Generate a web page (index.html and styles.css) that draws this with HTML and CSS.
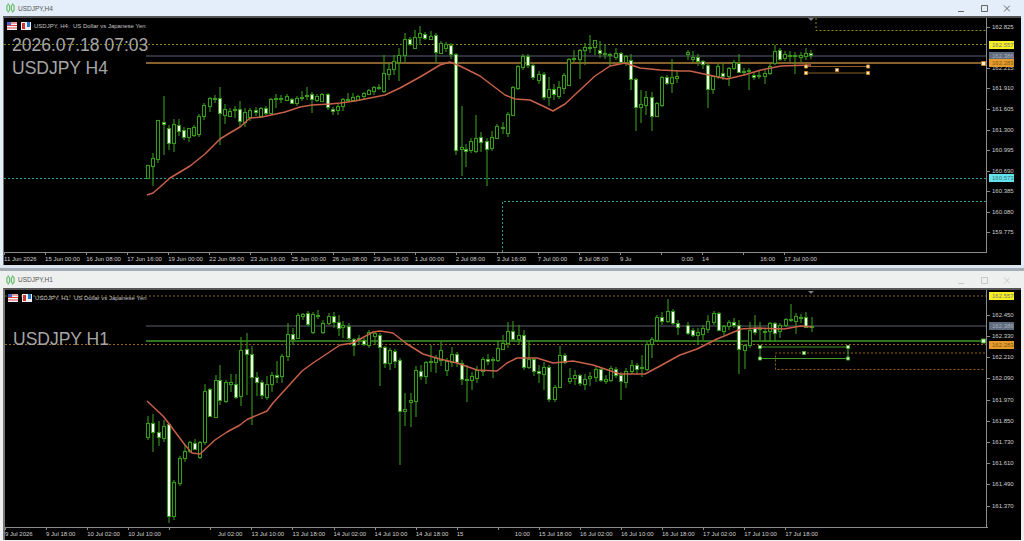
FILE: index.html
```html
<!DOCTYPE html>
<html lang="en">
<head>
<meta charset="utf-8">
<title>USDJPY charts</title>
<link rel="stylesheet" href="styles.css">
</head>
<body>
<section class="window window-top">
  <header class="titlebar">
    <svg class="app-icon" viewBox="0 0 10 10"><path d="M2.5 0v10M7.500 0v10" class="icon-wick"/><rect x="1" y="1.500" width="3" height="7" rx="1" class="icon-body"/><rect x="6" y="1.500" width="3" height="7" rx="1" class="icon-body"/></svg>
    <span class="title">USDJPY,H4</span>
    <div class="controls">
      <svg viewBox="0 0 52 12"><path d="M0 9.500h6M23.500 3.500h6v6h-6zM46 3.500l6 6M52 3.500l-6 6"/></svg>
    </div>
  </header>
  <div class="chart">
    <svg class="plot" id="plot-h4" viewBox="4 18 1017 247">
      <path class="dot yellow" d="M4 44.500H986M816 18V30.500H986"/>
      <path class="dot cyan" d="M4 178.500H986M502.500 252V201.500H986"/>
      <path class="level grey" d="M146 56H986"/>
      <path class="level amber" d="M146 63H986"/>
      <g class="candles"></g>
      <path class="ma" d="M147 195L153 193L160 187L170 178L190 166L205 154L220 139L228 134L240 127L250 118L262 117L285 112L300 107L312 105L330 104L340 103L355 101L385 95L400 88L420 77L440 65L450 62L460 66L480 76L505 95L515 99L530 100L545 107L553 111L565 104L580 90L595 76L610 66L625 63L640 68L660 70L680 71L690 71L704 74L727 79L744 75L761 70L781 66L811 65"/>
      <path class="rect amber-thin" d="M806 66.500H868M806 73H868"/>
      <path class="handles amber-h" d="M804.500 65h3v3h-3zM866.500 65h3v3h-3zM804.500 71.500h3v3h-3zM866.500 71.500h3v3h-3zM835.500 68.500h3v3h-3zM981.500 61.500h4v4h-4z"/>
      <path class="marker" d="M808 18h6l-3 3z"/>
    </svg>
    <div class="legend">
      <svg class="flag" viewBox="0 0 10 8"><rect width="10" height="8" fill="#f4f4f8"/><path d="M0 1h10M0 3.500h10M0 6h10" stroke="#d44"/><rect width="4" height="3" fill="#46c"/></svg>
      <svg class="mini" viewBox="0 0 10 8"><rect width="10" height="8" fill="#eee"/><rect x="1" y="1" width="3" height="6" fill="#c33"/><rect x="6" y="0" width="3" height="5" fill="#27c"/></svg>
      <span>USDJPY, H4:&nbsp; US Dollar vs Japanese Yen</span>
    </div>
    <div class="stamp">2026.07.18 07:03</div>
    <div class="stamp">USDJPY H4</div>
    <div class="time-axis">
      <span>11 Jun 2026</span><span>15 Jun 00:00</span><span>16 Jun 08:00</span><span>17 Jun 16:00</span><span>19 Jun 00:00</span><span>22 Jun 08:00</span><span>23 Jun 16:00</span><span>25 Jun 00:00</span><span>26 Jun 08:00</span><span>29 Jun 16:00</span><span>1 Jul 00:00</span><span>2 Jul 08:00</span><span>3 Jul 16:00</span><span>7 Jul 00:00</span><span>8 Jul 08:00</span><span>9 Ju</span><span class="end">0:00</span><span>14</span><span class="end">16:00</span><span>17 Jul 00:00</span>
    </div>
    <div class="price-axis">
      <span style="top:5px">162.825</span>
      <span style="top:46px">162.215</span>
      <span style="top:66px">161.910</span>
      <span style="top:87px">161.605</span>
      <span style="top:108px">161.300</span>
      <span style="top:128px">160.995</span>
      <span style="top:149px">160.690</span>
      <span style="top:169px">160.385</span>
      <span style="top:190px">160.080</span>
      <span style="top:210px">159.775</span>
      <span class="badge b-yellow" style="top:23px">162.557</span>
      <span class="badge b-grey" style="top:34px">162.386</span>
      <span class="badge b-orange" style="top:41px">162.283</span>
      <span class="badge b-cyan" style="top:156px">160.573</span>
    </div>
  </div>
</section>

<section class="window window-bottom">
  <header class="titlebar">
    <svg class="app-icon" viewBox="0 0 10 10"><path d="M2.5 0v10M7.500 0v10" class="icon-wick"/><rect x="1" y="1.500" width="3" height="7" rx="1" class="icon-body"/><rect x="6" y="1.500" width="3" height="7" rx="1" class="icon-body"/></svg>
    <span class="title">USDJPY,H1</span>
    <div class="controls">
      <svg viewBox="0 0 52 12"><path d="M0 9.500h6M23.500 3.500h6v6h-6zM46 3.500l6 6M52 3.500l-6 6"/></svg>
    </div>
  </header>
  <div class="chart">
    <svg class="plot" id="plot-h1" viewBox="5 290 1016 250">
      <path class="dot yellow2" d="M5 296H986"/>
      <path class="dot orange" d="M5 344.500H986M985 353H775.500V369.500H985"/>
      <path class="level grey" d="M146 326H986"/>
      <path class="level green" d="M146 341H986"/>
      <g class="candles"></g>
      <path class="ma" d="M147 401L163 416L170 425L185 445L192 453L200 454L215 440L227 432L240 425L247 419.500L267 411L273 403L302 371L313 363L340 345L353 343L373 332L380 331L393 333L407 344L423 354L440 359L457 363L477 370L497 371L507 363L517 358L537 358L553 363L573 361L593 365L620 374L645 374L660 366L680 355L697 349L717 339L741 329L757 328L784 329L801 326L812 327"/>
      <path class="rect green-thin" d="M760 347H848V358.500H760Z"/>
      <path class="handles green-h" d="M758.500 345.500h3v3h-3zM846.500 345.500h3v3h-3zM758.500 357h3v3h-3zM846.500 357h3v3h-3zM802.500 351.500h3v3h-3zM981.500 339h4v4h-4z"/>
      <path class="marker" d="M808 291h6l-3 3z"/>
    </svg>
    <div class="legend">
      <svg class="flag" viewBox="0 0 10 8"><rect width="10" height="8" fill="#f4f4f8"/><path d="M0 1h10M0 3.500h10M0 6h10" stroke="#d44"/><rect width="4" height="3" fill="#46c"/></svg>
      <svg class="mini" viewBox="0 0 10 8"><rect width="10" height="8" fill="#eee"/><rect x="1" y="1" width="3" height="6" fill="#c33"/><rect x="6" y="0" width="3" height="5" fill="#27c"/></svg>
      <span>USDJPY, H1:&nbsp; US Dollar vs Japanese Yen</span>
    </div>
    <div class="stamp stamp-h1">USDJPY H1</div>
    <div class="time-axis">
      <span>9 Jul 2026</span><span>9 Jul 18:00</span><span>10 Jul 02:00</span><span>10 Jul 10:00</span><span></span><span class="end">Jul 02:00</span><span>13 Jul 10:00</span><span>13 Jul 18:00</span><span>14 Jul 02:00</span><span>14 Jul 10:00</span><span>14 Jul 18:00</span><span>15</span><span class="end">10:00</span><span>15 Jul 18:00</span><span>16 Jul 02:00</span><span>16 Jul 10:00</span><span>16 Jul 18:00</span><span>17 Jul 02:00</span><span>17 Jul 10:00</span><span>17 Jul 18:00</span>
    </div>
    <div class="price-axis">
      <span style="top:21px">162.450</span>
      <span style="top:42px">162.330</span>
      <span style="top:63px">162.210</span>
      <span style="top:84px">162.090</span>
      <span style="top:106px">161.970</span>
      <span style="top:127px">161.850</span>
      <span style="top:148px">161.730</span>
      <span style="top:169px">161.610</span>
      <span style="top:190px">161.490</span>
      <span style="top:212px">161.370</span>
      <span class="badge b-yellow" style="top:2px">162.557</span>
      <span class="badge b-grey" style="top:32px">162.386</span>
      <span class="badge b-orange" style="top:51px">162.283</span>
    </div>
  </div>
</section>
<script src="chart.js"></script>
</body>
</html>
```

FILE: styles.css
```css
* { box-sizing: border-box; }
html, body { margin: 0; padding: 0; }
body {
  width: 1024px;
  height: 541px;
  overflow: hidden;
  background: #fff;
  font-family: "Liberation Sans", Arial, sans-serif;
  display: flex;
  flex-direction: column;
}
.window { padding: 0 3px 0 3px; display: flex; flex-direction: column; }
.window-top { height: 268px; background: #e3eefa; border-bottom: 3px solid #dbe6f0; }
.window-bottom { height: 273px; background: #eef0f0; border-top: 3px solid #a4adb6; }
.titlebar { display: flex; align-items: center; flex: none; position: relative; }
.window-top .titlebar { height: 16px; padding-left: 3px; }
.window-bottom .titlebar { height: 17px; padding-left: 3px; }
.app-icon { width: 9px; height: 10px; margin-right: 3px; flex: none; }
.icon-wick { stroke: #46a84a; fill: none; stroke-width: 1; }
.icon-body { stroke: #46a84a; fill: #dff3df; stroke-width: 1; }
.title { font-size: 6.500px; color: #555; letter-spacing: 0; }
.controls { margin-left: auto; margin-right: 11px; display: flex; }
.controls svg { width: 52px; height: 12px; fill: none; stroke: #666; stroke-width: 1; }
.window-bottom .controls svg { stroke: #c4c8c8; }
.chart {
  position: relative;
  flex: 1;
  background: #000;
  display: flex;
  flex-direction: column;
  border-top: 2px solid #555;
  border-left: 1px solid #777;
  color: #c4c4c4;
}
.window-bottom .chart { border-left-width: 2px; margin-bottom: 1px; }
.plot { position: absolute; left: 0; top: 0; width: 100%; height: 100%; }
.legend {
  position: relative;
  display: flex;
  align-items: center;
  height: 8px;
  margin-top: 4px;
  padding-left: 3px;
  font-size: 6px;
  line-height: 8px;
  color: #c0c0c0;
  flex: none;
}
.flag { width: 10px; height: 8px; margin-right: 4px; flex: none; }
.mini { width: 10px; height: 8px; margin-right: 3px; flex: none; }
.stamp {
  position: relative;
  font-size: 17.500px;
  line-height: 23px;
  color: #a6a6a6;
  padding-left: 8px;
  flex: none;
}
.legend + .stamp { margin-top: 4px; }
.legend + .stamp-h1 { margin-top: 26px; }
.time-axis {
  position: relative;
  margin-top: auto;
  flex: none;
  width: 983px;
  height: 13px;
  border-top: 1px solid #8c8c8c;
  display: grid;
  grid-template-columns: repeat(20, 41.070px);
  font-size: 6px;
  line-height: 8px;
  padding-top: 2px;
  white-space: nowrap;
  color: #cfcfcf;
}
.time-axis span { position: relative; }
.time-axis span::before {
  content: "";
  position: absolute;
  left: 0;
  top: -2px;
  width: 1px;
  height: 2px;
  background: #8c8c8c;
}
.time-axis .end { text-align: right; padding-right: 9px; }
.price-axis {
  position: absolute;
  left: 982px;
  right: 0;
  top: 0;
  bottom: 13px;
  border-left: 1px solid #8c8c8c;
  font-size: 6px;
  line-height: 8px;
  color: #cfcfcf;
}
.window-bottom .price-axis { left: 981px; }
.price-axis span {
  position: absolute;
  left: 5px;
  height: 8px;
  white-space: nowrap;
}
.price-axis span::before {
  content: "";
  position: absolute;
  left: -5px;
  top: 4px;
  width: 3px;
  height: 1px;
  background: #8c8c8c;
}
.price-axis .badge { left: 2px; width: 25px; padding-left: 3px; }
.price-axis .badge::before { display: none; }
.b-yellow { background: #f6f021; color: #777; }
.b-grey { background: #5e6b7c; color: #aab; }
.b-orange { background: #e69a2a; color: #7a5a20; }
.b-cyan { background: #62e4ee; color: #3d6f78; }
.dot { fill: none; stroke-width: 1; stroke-dasharray: 2 2; }
.yellow { stroke: #8b8a18; }
.yellow2 { stroke: #7e6e14; }
.cyan { stroke: #2a9a9c; }
.orange { stroke: #9a6410; }
.level { fill: none; stroke-width: 1.500; }
.grey { stroke: #3c424a; }
.amber { stroke: #b5803a; }
.green { stroke: #3f9a2a; }
.rect { fill: none; stroke-width: 1; }
.amber-thin { stroke: #8a5f22; }
.green-thin { stroke: #3f9a2a; }
.handles { stroke-width: 1; }
.amber-h { fill: #fff3d6; stroke: #c9822a; }
.green-h { fill: #e4ffd8; stroke: #46a82e; }
.marker { fill: #777c82; }
.ma { fill: none; stroke: #c8604a; stroke-width: 1.500; stroke-linejoin: round; }
.wick { stroke: #38991a; stroke-width: 1.100; fill: none; }
.bear { fill: #000; stroke: #38991a; stroke-width: 1.100; }
.bull { fill: #fff; stroke: #38991a; stroke-width: 1.100; }
```

FILE: chart.js
```js
// Each candle: [x, high, bodyTop, bodyBottom, low, filled]
var H4 = [
[148,165,165,178,178,0],[153,153,158,166,186,0],[158,120,120,159,163,0],[164,96,122,124,155,1],[169,125,128,143,150,1],[174,119,124,143,152,0],[179,119,125,131,136,1],[184,127,130,137,140,1],[189,128,128,137,142,0],[194,125,127,135,137,0],[199,114,116,134,137,0],[204,103,105,116,120,0],[210,97,98,106,112,0],[215,95,98,99,103,0],[220,87,98,113,145,1],[225,104,109,115,124,0],[230,108,111,116,117,0],[235,106,109,110,118,0],[240,101,109,121,127,1],[245,108,112,122,127,0],[250,108,110,117,121,0],[256,107,110,112,116,1],[261,107,108,116,118,0],[266,106,108,113,115,1],[271,98,99,113,114,0],[276,94,98,99,108,0],[281,95,98,99,103,0],[287,94,96,100,101,0],[292,98,99,103,104,1],[297,96,98,103,106,0],[302,91,97,98,101,0],[307,87,95,96,100,0],[312,92,94,99,113,1],[317,94,96,100,102,0],[322,93,94,101,102,0],[328,93,94,107,110,1],[333,107,109,111,115,1],[338,104,106,110,115,0],
[343,98,99,106,111,0],[348,93,99,100,102,1],[353,93,97,100,102,0],[358,95,96,100,101,0],[364,92,93,96,99,0],[369,89,90,94,95,0],[374,86,87,91,95,0],[379,84,87,88,90,1],[384,55,73,91,93,0],[389,63,69,74,80,0],[394,55,61,69,75,0],[399,48,55,62,81,0],[405,33,39,55,62,0],[410,37,39,44,46,1],[415,30,37,48,49,0],[420,26,33,37,45,0],[425,32,34,38,40,1],[431,31,36,39,40,0],[436,33,35,52,62,1],[441,41,43,53,54,0],[446,42,44,48,52,0],[451,43,45,54,59,1],[456,53,54,150,155,1],
[462,106,147,149,176,0],[466,144,149,151,167,1],[471,138,141,150,153,0],[476,115,138,151,153,0],[481,132,137,142,152,1],[487,138,141,149,186,1],[492,131,137,148,151,0],[497,124,126,138,139,0],[503,122,127,128,134,0],[508,112,114,133,137,0],[513,86,87,115,116,0],[518,65,66,88,90,0],[523,54,56,67,70,0],[528,54,56,65,68,1],[533,63,65,77,80,1],[539,71,74,80,84,0],[544,72,74,97,100,1],[549,77,89,97,106,0],[554,84,89,94,100,1],[559,81,87,96,99,0],[564,73,75,88,94,0],[569,58,59,85,86,0],[574,50,58,59,62,0],[580,49,50,59,79,0],[585,43,47,50,65,0],[590,35,47,48,53,0],[595,40,40,47,55,0],[600,41,50,53,58,1],[605,44,53,54,59,1],[610,53,54,55,66,1],[616,48,53,57,60,0],[621,52,53,62,64,1],[626,55,56,62,66,0],[631,54,60,79,90,1],[636,78,79,107,131,1],[641,90,104,107,123,0],[646,91,97,105,115,0],[652,92,97,116,131,1],[657,102,103,116,117,0],[662,76,77,105,107,0],[667,75,77,83,85,1],[672,59,77,83,93,0],[677,70,76,78,83,0],
[688,50,52,54,60,0],[693,51,57,59,63,0],[698,54,57,61,66,1],[703,60,61,64,69,1],[708,64,65,89,108,1],[713,75,76,89,94,0],[718,64,66,76,79,0],[723,63,73,76,80,1],[729,67,68,76,86,0],[734,60,62,68,70,0],[739,54,63,72,73,1],[744,68,71,72,76,0],[749,68,70,71,90,0],[754,72,75,77,80,1],[759,70,75,76,79,0],[765,70,73,76,84,0],[770,64,66,73,75,0],[775,45,51,63,65,0],[780,48,50,59,61,1],[785,51,54,58,61,0],[790,51,55,56,62,0],[795,52,55,56,74,1],[801,52,55,57,62,0],[806,48,53,56,60,0],[811,50,53,55,59,1]
];
var H1 = [
[148,416,423,437,440,0],[153,414,423,432,452,1],[159,421,432,437,446,1],[164,420,426,438,442,0],[169,423,424,516,523,1],[174,480,482,516,520,0],[180,456,458,483,486,0],[185,444,451,458,462,0],[190,441,442,451,453,0],[195,439,443,449,450,1],[200,441,442,457,459,0],[205,384,391,442,445,0],[210,388,389,416,417,1],[216,375,380,417,418,0],[220,365,380,400,405,1],[226,380,382,401,403,0],[231,374,382,384,392,0],[236,374,384,397,399,1],[241,337,350,396,406,0],[247,333,349,354,395,1],[252,346,354,377,425,1],[257,372,377,382,396,1],[262,380,382,395,399,1],[267,376,384,397,400,0],[272,372,375,384,392,0],[277,361,375,377,383,1],[282,354,356,376,383,0],[288,323,334,356,361,0],[293,328,334,339,345,1],[298,313,315,338,339,0],[303,313,314,316,320,0],[308,311,313,324,326,1],[313,312,314,332,334,0],[318,310,315,316,319,0],[323,320,323,332,334,0],[329,313,316,323,325,0],[334,312,316,322,328,1],[339,315,322,328,336,1],
[343,321,325,327,338,0],[349,323,326,338,340,1],[354,338,339,345,356,1],[359,335,338,339,345,0],[364,338,340,344,346,1],[369,330,332,345,348,0],[375,331,333,336,345,0],[380,333,335,347,386,1],[385,346,347,363,368,1],[390,348,350,363,370,0],[395,349,351,361,368,1],[400,358,360,411,465,1],[405,393,409,411,426,0],[411,393,400,402,427,0],[416,366,370,401,417,0],[421,365,371,376,380,1],[426,361,362,376,384,0],[431,345,361,362,372,0],[436,355,358,362,373,0],[441,342,350,360,366,0],[447,358,361,370,376,0],[452,347,354,362,367,0],[457,352,354,362,367,1],[462,360,363,379,385,1],[467,365,379,380,402,1],[472,372,376,380,390,0],[477,366,370,378,383,0],[483,357,359,371,376,0],[488,354,359,361,365,1],[493,357,359,360,378,0],[498,340,348,360,362,0],[503,335,343,349,350,0],[508,322,331,343,348,0],[513,321,331,339,341,1],[519,325,335,339,345,0],[524,330,335,367,370,1],[529,340,359,367,369,0],[534,358,359,371,376,1],[539,365,371,373,383,1],[544,362,367,374,390,0],[549,365,367,399,402,1],[555,385,387,399,402,0],[560,346,355,387,388,0],[565,353,355,362,364,1],[570,368,378,381,384,0],[575,370,375,378,385,0],[580,374,375,383,386,1],[585,374,379,384,390,0],[590,372,376,378,386,0],[596,367,369,377,382,0],[601,367,369,380,382,1],[606,375,379,381,384,0],[611,366,368,380,382,0],[616,367,369,375,378,1],[621,372,375,381,400,1],[626,368,371,382,388,0],[632,360,365,371,374,0],[637,363,365,369,374,1],[642,355,367,368,377,1],[647,342,344,369,371,0],[652,337,339,344,358,0],[657,315,317,340,342,0],[662,312,317,321,325,1],[668,299,311,321,323,0],[673,309,311,323,325,1],[678,320,323,327,335,1],
[688,322,325,333,335,1],[693,328,330,335,337,1],[698,328,332,335,345,0],[703,325,328,334,340,0],[708,315,321,329,333,0],[714,311,313,322,325,0],[719,312,313,330,331,1],[724,325,326,331,335,0],[729,320,322,326,330,0],[734,318,322,325,328,1],[739,320,325,349,374,1],[745,344,345,350,369,0],[750,322,330,345,348,0],[755,315,328,332,335,1],[760,322,328,329,340,0],[765,328,331,332,342,0],[770,322,323,331,342,0],[775,322,323,333,342,1],[780,323,325,331,338,0],[786,318,319,325,327,0],[791,304,319,320,322,0],[796,313,316,321,334,0],[801,314,317,318,323,0],[806,312,317,327,328,1],[812,317,326,327,332,0]
];

function draw(id, data) {
  var ns = "http://www.w3.org/2000/svg";
  var group = document.querySelector("#" + id + " .candles");
  var wicks = "";
  var i, c, rect, path;
  for (i = 0; i < data.length; i++) {
    c = data[i];
    wicks += "M" + c[0] + " " + c[1] + "V" + c[4];
  }
  path = document.createElementNS(ns, "path");
  path.setAttribute("class", "wick");
  path.setAttribute("d", wicks);
  group.appendChild(path);
  for (i = 0; i < data.length; i++) {
    c = data[i];
    rect = document.createElementNS(ns, "rect");
    rect.setAttribute("class", c[5] ? "bull" : "bear");
    rect.setAttribute("x", c[0] - 1.5);
    rect.setAttribute("y", c[2] + 0.5);
    rect.setAttribute("width", 3);
    rect.setAttribute("height", Math.max(c[3] - c[2], 1));
    group.appendChild(rect);
  }
}
draw("plot-h4", H4);
draw("plot-h1", H1);
```
